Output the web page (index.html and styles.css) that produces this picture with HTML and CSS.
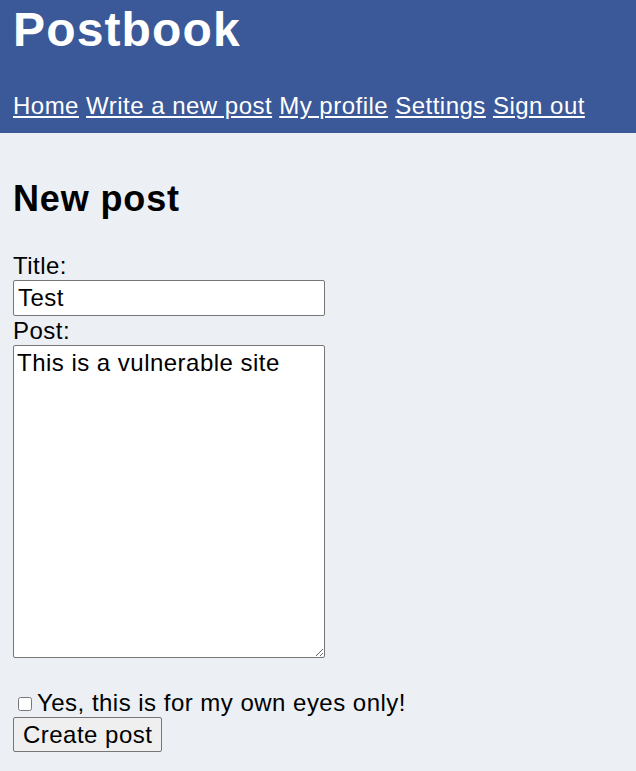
FILE: index.html
```html
<!DOCTYPE html>
<html lang="en">
<head>
<meta charset="utf-8">
<title>Postbook</title>
<link rel="stylesheet" href="styles.css">
</head>
<body>
<header class="site-header">
  <h1 class="brand">Postbook</h1>
  <nav class="nav">
    <a href="#">Home</a> <a href="#">Write a new post</a> <a href="#">My profile</a> <a href="#">Settings</a> <a href="#">Sign out</a>
  </nav>
</header>
<main class="content">
  <h2 class="page-title">New post</h2>
  <form class="post-form">
    <label class="field-label" for="title">Title:</label>
    <input class="text-input" id="title" type="text" value="Test">
    <label class="field-label" for="post">Post:</label>
    <textarea class="text-area" id="post">This is a vulnerable site</textarea>
    <div class="spacer"></div>
    <label class="check-row"><input class="check" type="checkbox"><span>Yes, this is for my own eyes only!</span></label>
    <button class="btn" type="button">Create post</button>
  </form>
</main>
</body>
</html>
```
FILE: styles.css
```css
html, body {
  margin: 0;
  padding: 0;
}
body {
  background: #eceff4;
  font-family: "Liberation Sans", Arial, sans-serif;
  font-size: 24px;
  letter-spacing: 0.02em;
  color: #000;
}
.site-header {
  background: #3b5998;
  padding: 2px 13px 13px;
  height: 118px;
}
.brand {
  margin: 0;
  font-size: 48px;
  line-height: 55px;
  font-weight: bold;
  letter-spacing: 0.024em;
  color: #fff;
}
.nav {
  margin-top: 35px;
  line-height: 28px;
  white-space: nowrap;
}
.nav a {
  color: #fff;
  text-decoration: underline;
  text-underline-offset: 2px;
}
.content {
  padding: 0 13px;
}
.page-title {
  margin: 45px 0 0;
  font-size: 36px;
  line-height: 41px;
  font-weight: bold;
  letter-spacing: 0.024em;
}
.post-form {
  margin-top: 32px;
  display: flex;
  flex-direction: column;
  align-items: flex-start;
}
.field-label {
  display: block;
  line-height: 29px;
}
.text-input {
  box-sizing: border-box;
  width: 312px;
  height: 36px;
  margin: 0;
  padding: 1px 4px;
  border: 1px solid #767676;
  border-radius: 2px;
  background: #fff;
  font-family: "Liberation Sans", Arial, sans-serif;
  font-size: 24px;
  letter-spacing: 0.02em;
  color: #000;
}
.text-area {
  box-sizing: border-box;
  width: 312px;
  height: 313px;
  margin: 0;
  padding: 3px 3px;
  border: 1px solid #767676;
  border-radius: 2px;
  background: #fff;
  font-family: "Liberation Sans", Arial, sans-serif;
  font-size: 24px;
  letter-spacing: 0.02em;
  line-height: 27px;
  color: #000;
  resize: both;
}
.spacer {
  height: 29px;
}
.check-row {
  display: flex;
  align-items: center;
  line-height: 29px;
  height: 30px;
  white-space: nowrap;
}
.check {
  width: 14px;
  height: 14px;
  margin: 3px 5px 0 5px;
}
.btn {
  box-sizing: border-box;
  height: 35px;
  width: 149px;
  margin: 0;
  padding: 0 9px;
  border: 1px solid #767676;
  border-radius: 2px;
  background: #efefef;
  font-family: "Liberation Sans", Arial, sans-serif;
  font-size: 24px;
  letter-spacing: 0.02em;
  color: #000;
  text-align: left;
  white-space: nowrap;
}
```
